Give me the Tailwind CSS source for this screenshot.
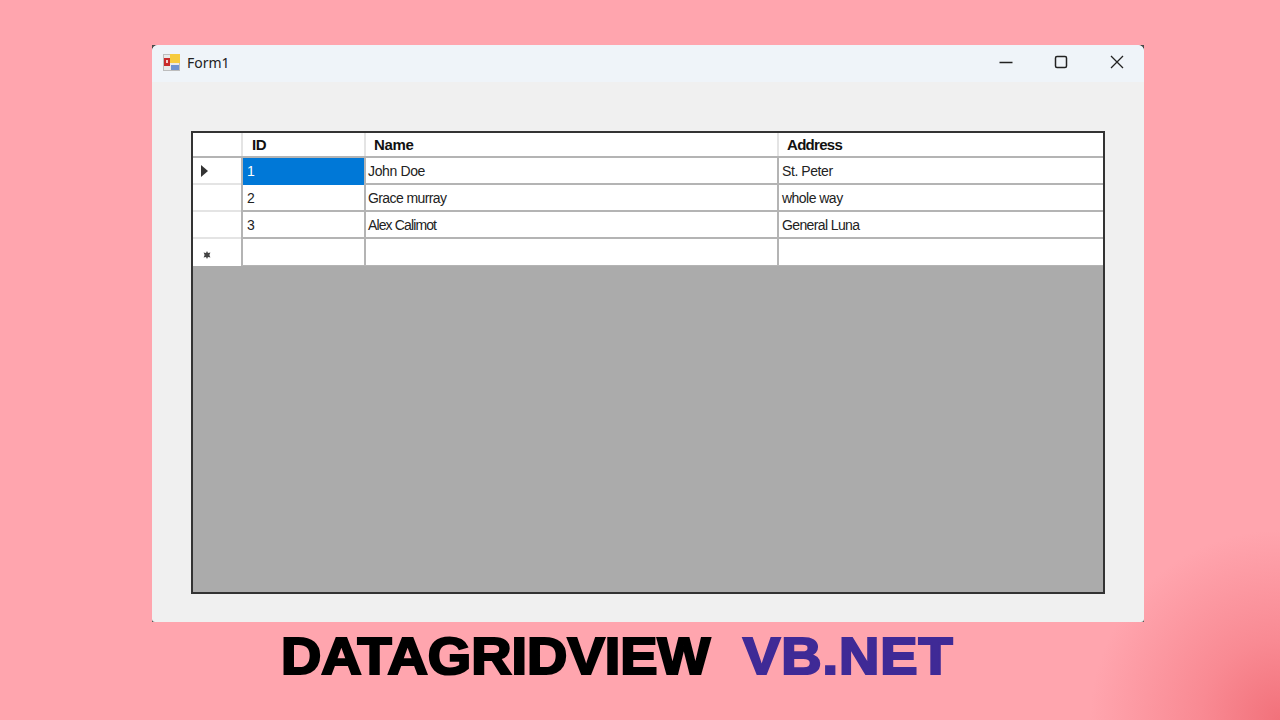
<!DOCTYPE html>
<html lang="en">
<head>
    <meta charset="UTF-8">
    <title>DataGridView VB.NET</title>
    <script src="https://cdn.jsdelivr.net/npm/@tailwindcss/browser@4"></script>
</head>
<body class="w-[1280px] h-[720px] overflow-hidden bg-[#ffa5ae] bg-[radial-gradient(circle_at_100%_100%,#f2717a_0,#f98a93_80px,#ffa5ae_190px)] pt-[45px] pl-[152px] font-['Liberation_Sans',sans-serif]">

    <!-- window -->
    <div class="w-[992px] h-[577px] bg-[#4a4a4a]">
        <div class="w-full h-full flex flex-col overflow-hidden bg-[#f0f0f0] rounded-t-[6px] rounded-b-[3px]">
            <div class="h-[37px] shrink-0 flex items-center pb-[3px] bg-[#eff4f9]">
                <svg class="ml-[11px] w-[17px] h-[17px]" viewBox="0 0 17 17">
                    <rect x="0.5" y="0.5" width="16" height="16" fill="#e9e9e9" stroke="#bdbdbd"/>
                    <rect x="7" y="0" width="10" height="9" fill="#f6cb3e"/>
                    <rect x="1" y="4" width="6" height="8" fill="#c92a2a"/>
                    <rect x="3" y="6" width="2" height="3" fill="#f5d0d0"/>
                    <rect x="8" y="11" width="8" height="5" fill="#6f93cf"/>
                </svg>
                <span class="ml-[7px] text-[14px] text-[#222] font-['Noto_Sans',sans-serif]">Form1</span>
                <div class="ml-auto flex items-center mr-[20px]">
                    <svg class="w-[14px] h-[14px]" viewBox="0 0 14 14" fill="none" stroke="#222" stroke-width="1.3"><path d="M0.5 7.5H13.5"/></svg>
                    <svg class="ml-[41px] w-[14px] h-[14px]" viewBox="0 0 14 14" fill="none" stroke="#222" stroke-width="1.5"><rect x="1.5" y="1.5" width="11" height="11" rx="1.5"/></svg>
                    <svg class="ml-[42px] w-[14px] h-[14px]" viewBox="0 0 14 14" fill="none" stroke="#222" stroke-width="1.3"><path d="M1 1L13 13M13 1L1 13"/></svg>
                </div>
            </div>

            <!-- grid -->
            <div class="mt-[49px] ml-[39px] w-[914px] h-[463px] flex flex-col border-2 border-[#333] bg-[#ababab]">
                <div class="h-[25px] shrink-0 grid grid-cols-[48px_123px_413px_1fr] bg-white border-b-2 border-[#b4b4b4] text-[15px] font-bold text-[#111] tracking-[-0.3px] leading-[23px]">
                    <div></div>
                    <div class="border-l-2 border-[#e4e4e4] pl-[9px]">ID</div>
                    <div class="border-l-2 border-[#e4e4e4] pl-[8px]">Name</div>
                    <div class="border-l-2 border-[#e4e4e4] pl-[8px] tracking-[-0.7px]">Address</div>
                </div>
                <div class="h-[27px] shrink-0 grid grid-cols-[48px_123px_413px_1fr] grid-rows-[27px] bg-white text-[14px] text-[#222] leading-[26px]">
                    <div class="border-b-2 border-[#e4e4e4] flex items-center pl-[8px]">
                        <svg class="w-[7px] h-[12px]" viewBox="0 0 7 12"><path d="M0 0L7 6L0 12Z" fill="#333"/></svg>
                    </div>
                    <div class="border-l-2 border-[#b4b4b4]"><div class="h-full bg-[#0078d7] text-white pl-[4px]">1</div></div>
                    <div class="border-l-2 border-b-2 border-[#b4b4b4] pl-[2px] tracking-[-0.37px]">John Doe</div>
                    <div class="border-l-2 border-b-2 border-[#b4b4b4] pl-[3px] tracking-[-0.42px]">St. Peter</div>
                </div>
                <div class="h-[27px] shrink-0 grid grid-cols-[48px_123px_413px_1fr] grid-rows-[27px] bg-white text-[14px] text-[#222] leading-[26px]">
                    <div class="border-b-2 border-[#e4e4e4]"></div>
                    <div class="border-l-2 border-b-2 border-[#b4b4b4] pl-[4px]">2</div>
                    <div class="border-l-2 border-b-2 border-[#b4b4b4] pl-[2px] tracking-[-0.6px]">Grace murray</div>
                    <div class="border-l-2 border-b-2 border-[#b4b4b4] pl-[3px] tracking-[-0.53px]">whole way</div>
                </div>
                <div class="h-[27px] shrink-0 grid grid-cols-[48px_123px_413px_1fr] grid-rows-[27px] bg-white text-[14px] text-[#222] leading-[26px]">
                    <div class="border-b-2 border-[#e4e4e4]"></div>
                    <div class="border-l-2 border-b-2 border-[#b4b4b4] pl-[4px]">3</div>
                    <div class="border-l-2 border-b-2 border-[#b4b4b4] pl-[2px] tracking-[-0.87px]">Alex Calimot</div>
                    <div class="border-l-2 border-b-2 border-[#b4b4b4] pl-[3px] tracking-[-0.62px]">General Luna</div>
                </div>
                <div class="h-[27px] shrink-0 grid grid-cols-[48px_123px_413px_1fr] grid-rows-[27px] bg-white">
                    <div class="flex items-center pl-[10px] pt-[4px]">
                        <svg class="w-[8px] h-[8px]" viewBox="0 0 8 8"><path d="M4 0L5 2L7.4 1.4L6.4 4L7.4 6.6L5 6L4 8L3 6L0.6 6.6L1.6 4L0.6 1.4L3 2Z" fill="#444"/></svg>
                    </div>
                    <div class="border-l-2 border-b border-[#b4b4b4]"></div>
                    <div class="border-l-2 border-b border-[#b4b4b4]"></div>
                    <div class="border-l-2 border-b border-[#b4b4b4]"></div>
                </div>
            </div>
        </div>
    </div>

    <!-- caption -->
    <div class="mt-[7px] ml-[129px] w-fit flex items-center h-[55px] text-[51px] leading-[55px] font-bold whitespace-nowrap origin-left scale-x-[1.095] [-webkit-text-stroke:2.2px_currentColor]">
        <span class="text-black">DATAGRIDVIEW</span>
        <span class="ml-[30px] text-[#3f2a96] tracking-[0.9px]">VB.NET</span>
    </div>

</body>
</html>
